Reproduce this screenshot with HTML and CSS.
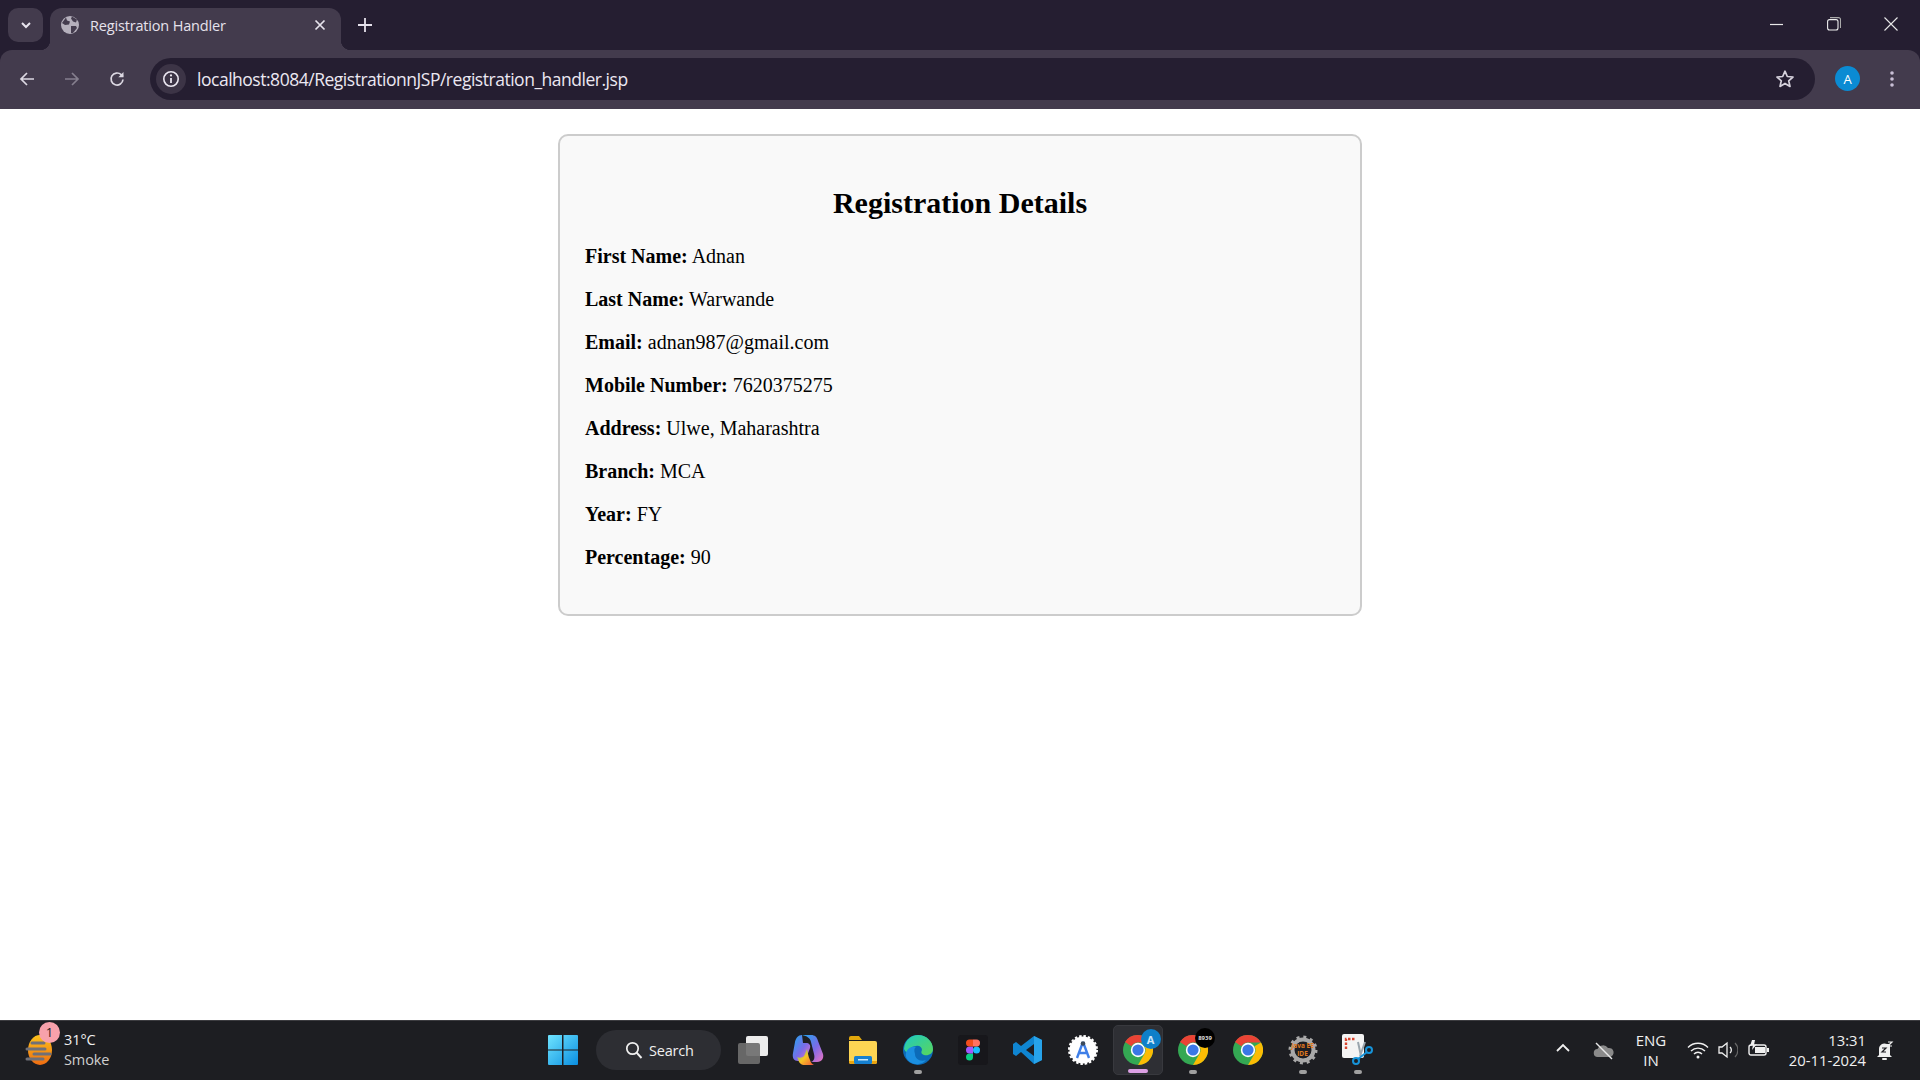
FILE: index.html
```html
<!DOCTYPE html>
<html lang="en">
<head>
<meta charset="utf-8">
<title>Registration Handler</title>
<link rel="stylesheet" href="styles.css">
</head>
<body>
<header class="browser">
  <div class="tabstrip">
    <button class="tab-search"><svg width="14" height="14" viewBox="0 0 14 14"><path d="M3 5l4 4 4-4" fill="none" stroke="#e8e4ee" stroke-width="2"/></svg></button>
    <div class="tab">
      <svg class="favicon" width="20" height="20" viewBox="0 0 20 20"><circle cx="10" cy="10" r="9" fill="#b5b0bc"/><path d="M6 2.500l1 3 3 1-1 3-4 .5-3-2zM12 1.500l5 3-1 3-3-1-2-3zM11 11l5 0 1 2-4 5-2 0z" fill="#443c4e"/></svg>
      <span class="tab-title">Registration Handler</span>
      <svg class="tab-close" width="12" height="12" viewBox="0 0 12 12"><path d="M1.500 1.500l9 9M10.500 1.500l-9 9" stroke="#e6e2ec" stroke-width="1.700"/></svg>
    </div>
    <svg class="new-tab" width="14" height="14" viewBox="0 0 14 14"><path d="M7 0v14M0 7h14" stroke="#e6e2ec" stroke-width="1.800"/></svg>
    <div class="window-controls">
      <svg width="14" height="14" viewBox="0 0 14 14"><path d="M0 7.500h13" stroke="#e8e8e8" stroke-width="1.200"/></svg>
      <svg width="14" height="14" viewBox="0 0 14 14"><rect x=".6" y="2.600" width="10.400" height="10.400" rx="2" fill="none" stroke="#eee" stroke-width="1.100"/><path d="M3 .6h8.500a2 2 0 0 1 2 2V11" fill="none" stroke="#aaa" stroke-width="1.100"/></svg>
      <svg width="14" height="14" viewBox="0 0 14 14"><path d="M.5.5l13 13M13.500.5l-13 13" stroke="#e8e8e8" stroke-width="1.100"/></svg>
    </div>
  </div>
  <div class="toolbar">
    <div class="nav">
      <svg width="18" height="18" viewBox="0 0 18 18"><path d="M16 9H3M9 3L3 9l6 6" fill="none" stroke="#dcd8e2" stroke-width="1.700"/></svg>
      <svg width="18" height="18" viewBox="0 0 18 18"><path d="M2 9h13M9 3l6 6-6 6" fill="none" stroke="#857f8e" stroke-width="1.700"/></svg>
      <svg width="18" height="18" viewBox="0 0 18 18"><path d="M15 9.500A6 6 0 1 1 13.200 4.700L15 6.500" fill="none" stroke="#dcd8e2" stroke-width="1.700"/><path d="M15.500 2v5.200h-5.200z" fill="#dcd8e2"/></svg>
    </div>
    <div class="omnibox">
      <span class="site-info"><svg width="18" height="18" viewBox="0 0 18 18"><circle cx="9" cy="9" r="7.200" fill="none" stroke="#eae6f0" stroke-width="1.600"/><path d="M9 8v5" stroke="#eae6f0" stroke-width="1.800"/><circle cx="9" cy="5.400" r="1.100" fill="#eae6f0"/></svg></span>
      <span class="url">localhost:8084/RegistrationnJSP/registration_handler.jsp</span>
      <svg class="star" width="20" height="20" viewBox="0 0 20 20"><path d="M10 2.200l2.300 5.300 5.700.5-4.300 3.800 1.300 5.600-5-3-5 3 1.300-5.600L2 8l5.700-.5z" fill="none" stroke="#d6d2dc" stroke-width="1.700" stroke-linejoin="round"/></svg>
    </div>
    <span class="avatar">A</span>
    <svg class="menu" width="4" height="16" viewBox="0 0 4 16"><circle cx="2" cy="2" r="1.800" fill="#c9bfd6"/><circle cx="2" cy="8" r="1.800" fill="#c9bfd6"/><circle cx="2" cy="14" r="1.800" fill="#c9bfd6"/></svg>
  </div>
</header>

<main class="page">
  <section class="card">
    <h2 class="card-title">Registration Details</h2>
    <p class="field"><strong>First Name:</strong> Adnan</p>
    <p class="field"><strong>Last Name:</strong> Warwande</p>
    <p class="field"><strong>Email:</strong> adnan987@gmail.com</p>
    <p class="field"><strong>Mobile Number:</strong> 7620375275</p>
    <p class="field"><strong>Address:</strong> Ulwe, Maharashtra</p>
    <p class="field"><strong>Branch:</strong> MCA</p>
    <p class="field"><strong>Year:</strong> FY</p>
    <p class="field"><strong>Percentage:</strong> 90</p>
  </section>
</main>

<footer class="taskbar">
  <div class="weather">
    <span class="weather-icon">
      <svg width="30" height="32" viewBox="0 0 30 32"><defs><linearGradient id="sun" x1="0" y1="0" x2="0" y2="1"><stop offset="0" stop-color="#fcc21b"/><stop offset="1" stop-color="#ee6c12"/></linearGradient></defs><ellipse cx="15" cy="16" rx="12" ry="15" fill="url(#sun)"/><path d="M7 9h12M2 15h18M9 20h16M2 25h16" stroke="#707078" stroke-width="3" stroke-linecap="round"/></svg>
      <span class="badge">1</span>
    </span>
    <div class="weather-text"><span>31°C</span><span class="muted">Smoke</span></div>
  </div>
  <div class="center">
    <svg class="start" width="30" height="30" viewBox="0 0 30 30"><defs><linearGradient id="win" x1="0" y1="0" x2="1" y2="1"><stop offset="0" stop-color="#6fe4ff"/><stop offset="1" stop-color="#0a8ee0"/></linearGradient></defs><path d="M0 1a1 1 0 0 1 1-1h13v14.400H0zM15.500 0H29a1 1 0 0 1 1 1v13.400H15.500zM0 15.600h14V30H1a1 1 0 0 1-1-1zM15.500 15.600H30V29a1 1 0 0 1-1 1H15.500z" fill="url(#win)"/></svg>
    <div class="search">
      <svg width="18" height="18" viewBox="0 0 18 18"><circle cx="7.500" cy="7.500" r="5.700" fill="none" stroke="#f0f0f0" stroke-width="1.700"/><path d="M11.500 11.500l5 5.500" stroke="#f0f0f0" stroke-width="1.900"/></svg>
      <span>Search</span>
    </div>
    <div class="apps">
      <span class="app"><svg width="30" height="30" viewBox="0 0 30 30"><rect x="8" y="1" width="22" height="20" rx="2" fill="#ececec"/><rect x="0" y="8" width="22" height="21" rx="2" fill="#6e6e6e" opacity=".92"/></svg></span>
      <span class="app"><svg width="32" height="32" viewBox="0 0 32 32"><defs><linearGradient id="cp1" x1="0" y1="0" x2="1" y2="1"><stop offset="0" stop-color="#1fa8f0"/><stop offset=".55" stop-color="#7a6be8"/><stop offset="1" stop-color="#ee74c0"/></linearGradient><linearGradient id="cp2" x1="0" y1="0" x2="1" y2="1"><stop offset="0" stop-color="#2fd0a0"/><stop offset=".5" stop-color="#f7c325"/><stop offset="1" stop-color="#f0553a"/></linearGradient></defs><path d="M10 1h9c4 0 6 2 7 6l5 13c1 4-1 8-6 8h-6c3-1 4-4 3-8l-3-12c-1-4-4-6-9-7z" fill="url(#cp1)"/><path d="M10 1c-4 0-6 3-7 7L1 19c-1 5 1 8 5 8h3c3 0 5-2 6-5l3-8c1-3-1-5-4-5h-3z" fill="url(#cp1)"/><path d="M22 31h-9c-4 0-6-2-7-6l-1-2c2 1 5 1 7-1l3-7c1 4 1 7 3 11 1 3 2 4 4 5z" fill="url(#cp2)"/></svg></span>
      <span class="app"><svg width="30" height="30" viewBox="0 0 30 30"><path d="M1 3a2 2 0 0 1 2-2h8l3 4h-13z" fill="#e2a80c"/><path d="M1 6h26a2 2 0 0 1 2 2v19a2 2 0 0 1-2 2H3a2 2 0 0 1-2-2z" fill="#fdd553"/><path d="M1 26h28v1a2 2 0 0 1-2 2H3a2 2 0 0 1-2-2z" fill="#eba40e"/><rect x="6" y="21" width="18" height="8" rx="1.500" fill="#1680d0"/><rect x="10" y="24" width="10" height="1.500" fill="#c8e8fb"/></svg></span>
      <span class="app dot"><svg width="30" height="32" viewBox="0 0 30 32"><defs><linearGradient id="edge" x1="0" y1="0" x2="1" y2="1"><stop offset="0" stop-color="#1ecbc0"/><stop offset="1" stop-color="#5bd65a"/></linearGradient></defs><circle cx="15" cy="16" r="15" fill="#0c6bb8"/><path d="M1 15C2 6 8 1 15 1c9 0 15 7 15 14 0 5-5 7-9 6-3-1-3-3-2-5 0-3-3-5-6-4-5 0-8 4-8 7-2-1-3-2-4-4z" fill="url(#edge)"/><path d="M12 20c0 5 5 8 11 6-3 4-10 6-16 2-3-2-5-6-4-9 1-4 5-7 10-6-2 1-2 4-1 7z" fill="#1b8fe0"/></svg></span>
      <span class="app"><span class="figma-bg"><svg width="14" height="22" viewBox="0 0 14 21"><circle cx="10.500" cy="10.500" r="3.500" fill="#1abcfe"/><path d="M3.500 14H7v3.500A3.500 3.500 0 1 1 3.500 14z" fill="#0acf83"/><path d="M3.500 7H7v7H3.500a3.500 3.500 0 0 1 0-7z" fill="#a259ff"/><path d="M3.500 0H7v7H3.500a3.500 3.500 0 0 1 0-7z" fill="#f24e1e"/><path d="M7 0h3.500a3.500 3.500 0 0 1 0 7H7z" fill="#ff7262"/></svg></span></span>
      <span class="app"><svg width="30" height="30" viewBox="0 0 30 30"><path d="M21 1l8 4v20l-8 4-13-12-5 4-3-2v-10l3-2 5 4zM21 9l-8 6 8 6z" fill="#0f85d1" fill-rule="evenodd"/><path d="M21 1l8 4v20l-8 4z" fill="#27a3ea"/></svg></span>
      <span class="app"><svg width="30" height="30" viewBox="0 0 30 30"><circle cx="15" cy="15" r="13.500" fill="#fff"/><circle cx="15" cy="15" r="14" fill="none" stroke="#fff" stroke-width="2" stroke-dasharray="2.500 1.900"/><path d="M15 7l-6 16M15 7l6 16M10 18h10" fill="none" stroke="#3f7fe8" stroke-width="2.400"/><circle cx="15" cy="8.500" r="2.300" fill="#3c4a5a"/></svg></span>
      <span class="app active"><svg width="30" height="30" viewBox="0 0 30 30"><use href="#chrome"/></svg><span class="profile blue">A</span></span>
      <span class="app dot"><svg width="30" height="30" viewBox="0 0 30 30"><use href="#chrome"/></svg><span class="profile black">8939</span></span>
      <span class="app"><svg width="30" height="30" viewBox="0 0 30 30"><g id="chrome"><circle cx="15" cy="15" r="15" fill="#34a853"/><path d="M15 0a15 15 0 0 1 13 7.500H15A7.500 7.500 0 0 0 8.500 11.200L2 7A15 15 0 0 1 15 0z" fill="#ea4335"/><path d="M28 7.500A15 15 0 0 1 15 30l6.500-11.200A7.500 7.500 0 0 0 21.500 11.200z" fill="#fbbc04"/><circle cx="15" cy="15" r="7.200" fill="#fff"/><circle cx="15" cy="15" r="5.600" fill="#3b78e7"/></g></svg></span>
      <span class="app dot"><svg width="30" height="30" viewBox="0 0 30 30"><circle cx="15" cy="15" r="10.500" fill="none" stroke="#a8a8a8" stroke-width="4"/><circle cx="15" cy="15" r="13" fill="none" stroke="#a8a8a8" stroke-width="3" stroke-dasharray="3 3.800"/><circle cx="15" cy="15" r="8" fill="#1d1d22"/></svg><span class="java">Java EE<br>IDE</span></span>
      <span class="app dot"><svg width="32" height="32" viewBox="0 0 32 32"><rect x="0" y="0" width="22" height="24" rx="2" fill="#f4f4f4"/><path d="M4 15V5h10" fill="none" stroke="#d9442e" stroke-width="2.400" stroke-dasharray="2.500 1.500"/><path d="M16 8l3 14M23 8l-5 14" stroke="#9aa5ad" stroke-width="2"/><circle cx="14" cy="27" r="3" fill="none" stroke="#1693d8" stroke-width="2"/><circle cx="27" cy="16" r="3" fill="none" stroke="#1693d8" stroke-width="2"/><path d="M16 25l9-7" stroke="#1693d8" stroke-width="2"/></svg></span>
    </div>
  </div>
  <div class="tray">
    <svg class="tray-chevron" width="14" height="9" viewBox="0 0 14 9"><path d="M1 8l6-6 6 6" fill="none" stroke="#f0f0f0" stroke-width="1.800"/></svg>
    <svg class="tray-cloud" width="22" height="18" viewBox="0 0 22 18"><path d="M5 15a4 4 0 0 1-.5-8A6 6 0 0 1 15 6a4.500 4.500 0 0 1 2 9z" fill="#8a8a8a"/><path d="M3 1l16 16" stroke="#e8e8e8" stroke-width="1.400"/></svg>
    <div class="lang"><span>ENG</span><span>IN</span></div>
    <svg class="tray-wifi" width="22" height="18" viewBox="0 0 22 18"><path d="M1 6.500a14 14 0 0 1 20 0M4 10a10 10 0 0 1 14 0M7 13a5.500 5.500 0 0 1 8 0" fill="none" stroke="#f0f0f0" stroke-width="1.400"/><circle cx="11" cy="16" r="1.500" fill="#f0f0f0"/></svg>
    <svg class="tray-volume" width="20" height="18" viewBox="0 0 20 18"><path d="M1 6h3l5-4v14l-5-4H1z" fill="none" stroke="#f0f0f0" stroke-width="1.300"/><path d="M12 6a4 4 0 0 1 0 6" fill="none" stroke="#f0f0f0" stroke-width="1.300"/><path d="M17 2a10 10 0 0 1 0 14" fill="none" stroke="#666" stroke-width="1.200"/></svg>
    <svg class="tray-battery" width="22" height="18" viewBox="0 0 22 18"><rect x="1" y="5" width="17" height="10" rx="2" fill="none" stroke="#f0f0f0" stroke-width="1.400"/><rect x="19" y="8" width="2" height="4" fill="#f0f0f0"/><path d="M4 0l-2 6 3-1-1 5 5-6-3 1 1-5z" fill="#f0f0f0"/><rect x="7" y="7" width="10" height="6" fill="#f0f0f0"/></svg>
    <div class="clock"><span>13:31</span><span>20-11-2024</span></div>
    <svg class="tray-bell" width="18" height="20" viewBox="0 0 18 20"><path d="M3 14V8a5.500 5.500 0 0 1 8-5h3v11l2 2H1z" fill="#f0f0f0"/><rect x="6" y="17" width="5" height="2" rx="1" fill="#f0f0f0"/><path d="M6 7h4l-4 4h4" fill="none" stroke="#1d1d22" stroke-width="1.200"/><path d="M12 1h4l-4 4h4" fill="none" stroke="#f0f0f0" stroke-width="1.200"/></svg>
  </div>
</footer>
</body>
</html>
```

FILE: styles.css
```css
* { box-sizing: border-box; }
html, body { height: 100%; }
body {
  margin: 0;
  display: flex;
  flex-direction: column;
  height: 100vh;
  overflow: hidden;
  background: #fff;
  font-family: "Liberation Serif", serif;
}

/* browser chrome */
.browser { flex: none; background: #251e31; font-family: "Open Sans", sans-serif; }
.tabstrip { height: 50px; display: flex; align-items: flex-end; padding-left: 8px; }
.tab-search {
  width: 35px; height: 34px; margin-bottom: 8px; padding: 0; border: 0;
  border-radius: 10px; background: #433b4d;
  display: flex; align-items: center; justify-content: center;
}
.tab {
  position: relative;
  width: 291px; height: 42px; margin-left: 7px;
  background: #433b4d; border-radius: 12px 12px 0 0;
  display: flex; align-items: center;
  padding: 0 15px 8px 10px;
  color: #e6e2ec; font-size: 14.500px; letter-spacing: -.17px;
}
.tab::before, .tab::after {
  content: ""; position: absolute; bottom: 0; width: 10px; height: 10px;
}
.tab::before { left: -10px; background: radial-gradient(circle at 0 0, transparent 10px, #433b4d 10.500px); }
.tab::after { right: -10px; background: radial-gradient(circle at 100% 0, transparent 10px, #433b4d 10.500px); }
.favicon { flex: none; }
.tab-title { margin-left: 10px; flex: 1; white-space: nowrap; }
.tab-close { flex: none; }
.new-tab { margin: 0 0 18px 17px; }
.window-controls {
  margin-left: auto; margin-bottom: 19px; padding-right: 22px;
  display: flex; gap: 43px;
}
.toolbar {
  height: 59px; background: #433b4d; border-radius: 12px 12px 0 0;
  display: flex; align-items: center; padding: 0 26px 1px 18px;
}
.nav { display: flex; gap: 27px; width: 132px; }
.omnibox {
  width: 1665px; height: 42px; border-radius: 21px; background: #251e31;
  display: flex; align-items: center; padding: 0 20px 0 6px;
}
.site-info {
  width: 30px; height: 30px; border-radius: 50%; background: #3c3446;
  display: flex; align-items: center; justify-content: center; flex: none;
}
.url { margin-left: 11px; flex: 1; color: #ece8f2; font-size: 17.500px; letter-spacing: -.48px; white-space: nowrap; }
.star { flex: none; }
.avatar {
  width: 25px; height: 25px; margin: 0 0 1px 20px; border-radius: 50%;
  background: #0b8bd3; color: #fff; font-size: 13px; flex: none;
  display: flex; align-items: center; justify-content: center;
}
.menu { margin-left: auto; flex: none; }

/* page */
.page { flex: 1; padding-top: 25px; display: flex; flex-direction: column; align-items: center; min-height: 0; }
.card {
  width: 804px; padding: 25px; height: 482px;
  background: #f9f9f9; border: 2px solid #ccc; border-radius: 10px;
  color: #000; font-size: 20px;
}
.card-title { margin: 25px 0 25px; font-size: 30px; text-align: center; line-height: 34px; }
.field { margin: 0 0 20px; line-height: 23px; }

/* taskbar */
.taskbar {
  flex: none; height: 60px; padding-bottom: 1px; background: #1d1e22; border-top: 1px solid #3c3c40;
  display: flex; align-items: center; color: #f0f0f0;
  font-family: "Open Sans", sans-serif; font-size: 15px; position: relative;
}
.weather { display: flex; align-items: center; width: 548px; padding-left: 25px; }
.weather-icon { position: relative; width: 30px; height: 32px; flex: none; }
.badge {
  position: absolute; left: 14px; top: -12px; width: 21px; height: 21px; border-radius: 50%;
  background: #f7a1ab; color: #222; font-size: 13px; text-align: center; line-height: 21px;
}
.weather-text { margin-left: 9px; display: flex; flex-direction: column; line-height: 20px; font-size: 14.500px; letter-spacing: -.1px; }
.muted { color: #cfcfcf; }
.center { display: flex; align-items: center; }
.start { flex: none; }
.search {
  width: 125px; height: 40px; margin-left: 18px; border-radius: 20px; background: #2d2e33;
  display: flex; align-items: center; padding-left: 29px; gap: 6px; font-size: 14.500px; letter-spacing: -.2px;
}
.apps { display: flex; margin-left: 4px; }
.app {
  position: relative; width: 55px; height: 50px; flex: none;
  display: flex; align-items: center; justify-content: center;
}
.dot::after {
  content: ""; position: absolute; left: 24px; bottom: 1px; width: 8px; height: 4px; border-radius: 2px; background: #a0a0a0;
}
.active { background: #2e2f34; border-radius: 5px; width: 50px; margin: 0 2.500px; border: 1px solid #38393e; }
.active::after {
  content: ""; position: absolute; left: 14px; bottom: 1px; width: 20px; height: 4px; border-radius: 2px; background: #dca0e4;
}
.figma-bg { width: 30px; height: 30px; background: #17171b; display: flex; align-items: center; justify-content: center; border-radius: 3px; }
.profile {
  position: absolute; left: 27px; top: 3px; width: 20px; height: 20px; border-radius: 50%;
  display: flex; align-items: center; justify-content: center; font-weight: 700;
}
.blue { background: #0e7fc9; color: #cfe8fa; font-size: 11px; }
.black { left: 30px; background: #000; color: #ddd; font-size: 6px; }
.java {
  position: absolute; left: 0; right: 0; top: 17px; text-align: center; color: #e07a20;
  font-size: 6.500px; line-height: 8px; font-weight: 700;
}
.tray { flex: 1; position: relative; height: 100%; }
.tray-chevron { position: absolute; left: 171px; top: 22px; }
.tray-cloud { position: absolute; left: 208px; top: 21px; }
.lang { position: absolute; left: 241px; width: 50px; top: 9px; display: flex; flex-direction: column; align-items: center; line-height: 20px; }
.tray-wifi { position: absolute; left: 302px; top: 20px; }
.tray-volume { position: absolute; left: 333px; top: 20px; }
.tray-battery { position: absolute; left: 363px; top: 19px; }
.clock { position: absolute; right: 54px; top: 9px; display: flex; flex-direction: column; align-items: flex-end; line-height: 20px; font-size: 14.800px; }
.tray-bell { position: absolute; right: 26px; top: 20px; }
```
